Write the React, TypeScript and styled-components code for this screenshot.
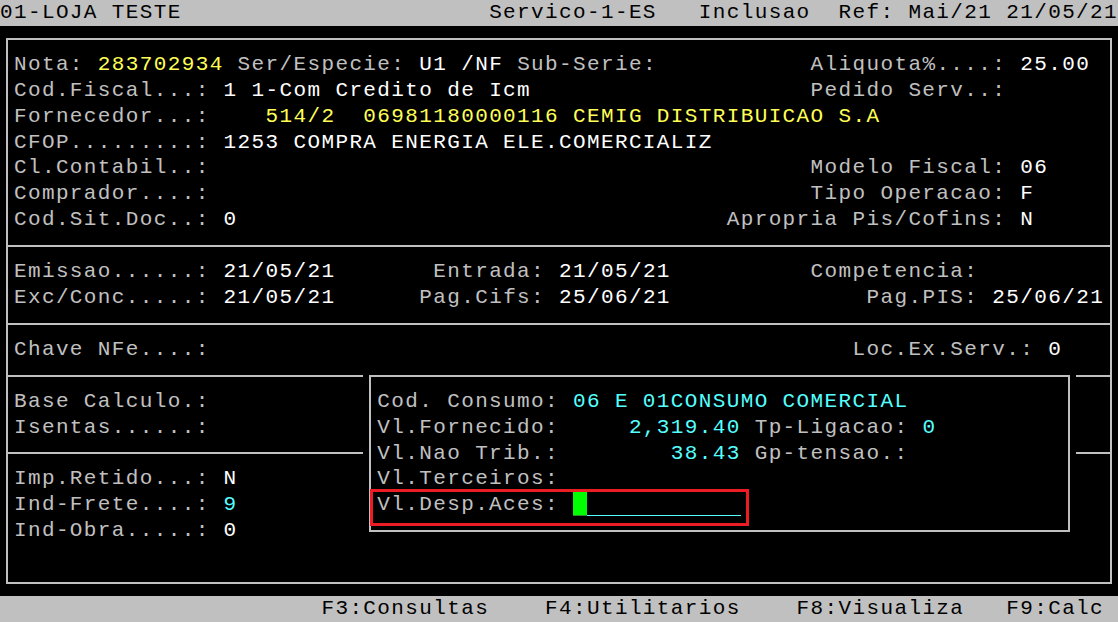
import React from "react";
import styled, { createGlobalStyle } from "styled-components";

// terminal grid: 80 columns x 24 rows
const CW = 1118 / 80;
const RH = 622 / 24;
const FONT = 21;
const HALF_X = CW / 2 - 1;
const HALF_Y = RH / 2 - 1;

const GlobalStyle = createGlobalStyle`
  html, body {
    margin: 0;
    padding: 0;
    background: #000;
    overflow: hidden;
  }
`;

const Screen = styled.div`
  position: relative;
  width: 1118px;
  height: 622px;
  background: #000;
  display: flex;
  flex-direction: column;
  font-family: "Liberation Mono", "DejaVu Sans Mono", monospace;
  font-size: ${FONT}px;
  letter-spacing: ${CW - FONT * 0.60009765625}px;
  color: #c0c0c0;
`;

const Bar = styled.div`
  flex: none;
  height: ${RH}px;
  background: #c0c0c0;
  color: #000;
`;

const Body = styled.div`
  flex: none;
  height: ${RH * 22}px;
  box-sizing: border-box;
  padding: ${HALF_Y}px ${HALF_X}px;
`;

const Frame = styled.div`
  position: relative;
  height: 100%;
  box-sizing: border-box;
  border: 2px solid #c0c0c0;
  padding: 0 ${HALF_X}px;
  display: flex;
  flex-direction: column;
`;

const Section = styled.div<{ $grow?: boolean }>`
  padding: ${HALF_Y}px 0;
  flex: ${(p) => (p.$grow ? 1 : "none")};
`;

const Divider = styled.div`
  flex: none;
  height: 2px;
  margin: 0 -${HALF_X}px;
  background: #c0c0c0;
`;

const Line = styled.div`
  height: ${RH}px;
  line-height: ${RH}px;
  white-space: pre;
`;

type Tone = "white" | "yellow" | "cyan";

const toneColor: Record<Tone, string> = {
  white: "#ffffff",
  yellow: "#ffff55",
  cyan: "#55ffff",
};

const Text = styled.span<{ $tone?: Tone }>`
  color: ${(p) => (p.$tone ? toneColor[p.$tone] : "inherit")};
`;

const Popup = styled.div`
  position: absolute;
  left: ${26 * CW - (CW / 2 + 1)}px;
  top: ${12.5 * RH - 1}px;
  width: ${51 * CW}px;
  height: ${7 * RH}px;
  box-sizing: border-box;
  padding: ${HALF_Y}px ${HALF_X}px;
  background: #000;
`;

const PopupFrame = styled.div`
  height: 100%;
  box-sizing: border-box;
  border: 2px solid #c0c0c0;
  padding: ${HALF_Y}px ${HALF_X}px;
`;

const Cursor = styled.span`
  display: inline-block;
  vertical-align: top;
  width: ${CW}px;
  height: ${RH - 2}px;
  background: #00ff00;
  box-shadow: inset 0 -1px 0 #2c8a2c;
`;

const Field = styled.span<{ $cols: number }>`
  display: inline-block;
  vertical-align: top;
  width: ${(p) => p.$cols * CW}px;
  height: ${RH - 2}px;
  box-sizing: border-box;
  border-bottom: 1px solid #55ffff;
`;

const Highlight = styled.div`
  position: absolute;
  left: 370px;
  top: 489px;
  width: 379px;
  height: 37px;
  box-sizing: border-box;
  border: 3px solid #ed1c24;
  pointer-events: none;
`;

type Seg = [number, string, Tone?];

function TermLine({ segs, origin = 0 }: { segs: Seg[]; origin?: number }) {
  let cur = origin;
  const out: React.ReactNode[] = [];
  segs.forEach(([col, text, tone], i) => {
    if (col > cur) out.push(" ".repeat(col - cur));
    out.push(
      <Text key={i} $tone={tone}>
        {text}
      </Text>
    );
    cur = col + text.length;
  });
  return <Line>{out.length ? out : " "}</Line>;
}

const header: Seg[] = [
  [0, "01-LOJA TESTE"],
  [35, "Servico-1-ES"],
  [50, "Inclusao"],
  [60, "Ref: Mai/21 21/05/21"],
];

const footer: Seg[] = [
  [23, "F3:Consultas"],
  [39, "F4:Utilitarios"],
  [57, "F8:Visualiza"],
  [72, "F9:Calc"],
];

const nota: Seg[][] = [
  [[1, "Nota:"], [7, "283702934", "yellow"], [17, "Ser/Especie:"], [30, "U1 /NF", "white"], [37, "Sub-Serie:"], [58, "Aliquota%....:"], [73, "25.00", "white"]],
  [[1, "Cod.Fiscal...:"], [16, "1 1-Com Credito de Icm", "white"], [58, "Pedido Serv..:"]],
  [[1, "Fornecedor...:"], [19, "514/2  06981180000116 CEMIG DISTRIBUICAO S.A", "yellow"]],
  [[1, "CFOP.........:"], [16, "1253 COMPRA ENERGIA ELE.COMERCIALIZ", "white"]],
  [[1, "Cl.Contabil..:"], [58, "Modelo Fiscal:"], [73, "06", "white"]],
  [[1, "Comprador....:"], [58, "Tipo Operacao:"], [73, "F", "white"]],
  [[1, "Cod.Sit.Doc..:"], [16, "0", "white"], [52, "Apropria Pis/Cofins:"], [73, "N", "white"]],
];

const datas: Seg[][] = [
  [[1, "Emissao......:"], [16, "21/05/21", "white"], [31, "Entrada:"], [40, "21/05/21", "white"], [58, "Competencia:"]],
  [[1, "Exc/Conc.....:"], [16, "21/05/21", "white"], [30, "Pag.Cifs:"], [40, "25/06/21", "white"], [62, "Pag.PIS:"], [71, "25/06/21", "white"]],
];

const chave: Seg[][] = [[[1, "Chave NFe....:"], [61, "Loc.Ex.Serv.:"], [75, "0", "white"]]];

const bases: Seg[][] = [[[1, "Base Calculo.:"]], [[1, "Isentas......:"]]];

const indicadores: Seg[][] = [
  [[1, "Imp.Retido...:"], [16, "N", "white"]],
  [[1, "Ind-Frete....:"], [16, "9", "cyan"]],
  [[1, "Ind-Obra.....:"], [16, "0", "white"]],
  [],
];

const consumo: Seg[][] = [
  [[27, "Cod. Consumo:"], [41, "06 E 01CONSUMO COMERCIAL", "cyan"]],
  [[27, "Vl.Fornecido:"], [45, "2,319.40", "cyan"], [54, "Tp-Ligacao:"], [66, "0", "cyan"]],
  [[27, "Vl.Nao Trib.:"], [48, "38.43", "cyan"], [54, "Gp-tensao.:"]],
  [[27, "Vl.Terceiros:"]],
];

const rows = (list: Seg[][], origin: number) =>
  list.map((segs, i) => <TermLine key={i} segs={segs} origin={origin} />);

export default function App() {
  return (
    <>
      <GlobalStyle />
      <Screen>
        <Bar>
          <TermLine segs={header} />
        </Bar>
        <Body>
          <Frame>
            <Section>{rows(nota, 1)}</Section>
            <Divider />
            <Section>{rows(datas, 1)}</Section>
            <Divider />
            <Section>{rows(chave, 1)}</Section>
            <Divider />
            <Section>{rows(bases, 1)}</Section>
            <Divider />
            <Section $grow>{rows(indicadores, 1)}</Section>
            <Popup>
              <PopupFrame>
                {rows(consumo, 27)}
                <Line>
                  <Text>Vl.Desp.Aces:</Text> <Cursor />
                  <Field $cols={11} />
                </Line>
              </PopupFrame>
            </Popup>
          </Frame>
        </Body>
        <Bar>
          <TermLine segs={footer} />
        </Bar>
        <Highlight />
      </Screen>
    </>
  );
}
